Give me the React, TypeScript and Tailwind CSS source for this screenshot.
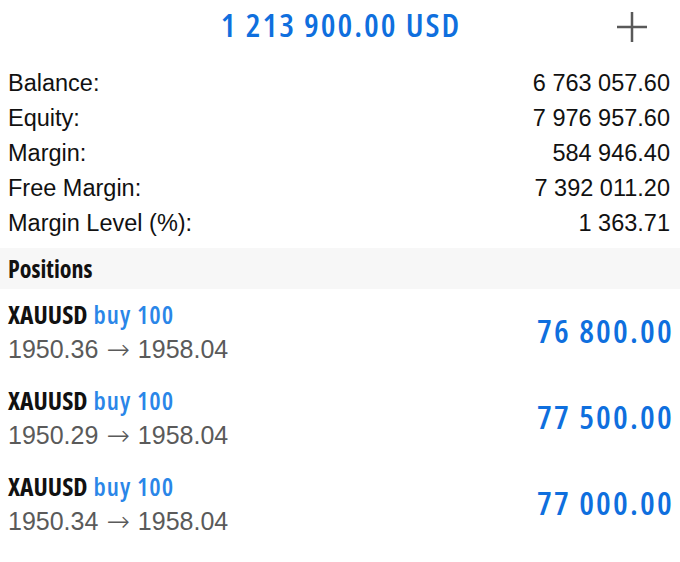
import React from "react";

const SUMMARY = [
  { label: "Balance:", value: "6 763 057.60" },
  { label: "Equity:", value: "7 976 957.60" },
  { label: "Margin:", value: "584 946.40" },
  { label: "Free Margin:", value: "7 392 011.20" },
  { label: "Margin Level (%):", value: "1 363.71" },
];

const POSITIONS = [
  { symbol: "XAUUSD", side: "buy 100", open: "1950.36", current: "1958.04", profit: "76 800.00" },
  { symbol: "XAUUSD", side: "buy 100", open: "1950.29", current: "1958.04", profit: "77 500.00" },
  { symbol: "XAUUSD", side: "buy 100", open: "1950.34", current: "1958.04", profit: "77 000.00" },
];

// Open Sans condensed face stands in for the iOS condensed font
const condensed = "font-['Open_Sans',sans-serif] font-stretch-[75%]";
const sans = "font-['Liberation_Sans',Arial,sans-serif]";

export default function App() {
  return (
    <div className={`w-[680px] h-[562px] overflow-hidden bg-white ${sans}`}>
      {/* Header */}
      <div className="relative flex h-[54px] items-center justify-center pb-[6px]">
        <span className={`${condensed} ml-[2px] text-[33px] font-semibold leading-none tracking-[2px] text-[#0f6fde]`}>
          1 213 900.00 USD
        </span>
        <button className="absolute right-[33px] top-[12px] h-[30px] w-[30px]">
          <svg viewBox="0 0 30 30" className="h-[30px] w-[30px]">
            <path d="M15 0V30M0 15H30" stroke="#595959" strokeWidth="2.5" fill="none" />
          </svg>
        </button>
      </div>

      {/* Account summary */}
      <div className="flex flex-col px-[8px] pb-[7px] pt-[12px]">
        {SUMMARY.map((row) => (
          <div key={row.label} className="flex h-[35px] items-center justify-between text-[23.5px] text-[#111]">
            <span>{row.label}</span>
            <span className="pr-[2px]">{row.value}</span>
          </div>
        ))}
      </div>

      {/* Positions section */}
      <div className="flex h-[41px] items-center bg-[#f7f7f7] px-[8px]">
        <span className={`${condensed} text-[24px] font-bold text-[#111]`}>Positions</span>
      </div>

      <div className="flex flex-col">
        {POSITIONS.map((p, i) => (
          <div key={i} className="flex h-[86px] items-center justify-between px-[8px]">
            <div className="flex flex-col">
              <div className={`${condensed} flex h-[36px] items-center gap-[6px] text-[25.5px]`}>
                <span className="font-bold text-[#111]">{p.symbol}</span>
                <span className="font-semibold tracking-[1px] text-[#2a86e8]">{p.side}</span>
              </div>
              <div className="flex h-[36px] items-center text-[25px] text-[#5a5a5a]">
                <span>{p.open}</span>
                <span className="px-[8px] font-['DejaVu_Sans',sans-serif] text-[28px] font-extralight leading-none">→</span>
                <span>{p.current}</span>
              </div>
            </div>
            <span className={`${condensed} -mr-[2px] mb-[4px] text-[33px] font-semibold leading-none tracking-[2.2px] text-[#0f6fde]`}>
              {p.profit}
            </span>
          </div>
        ))}
      </div>
    </div>
  );
}
